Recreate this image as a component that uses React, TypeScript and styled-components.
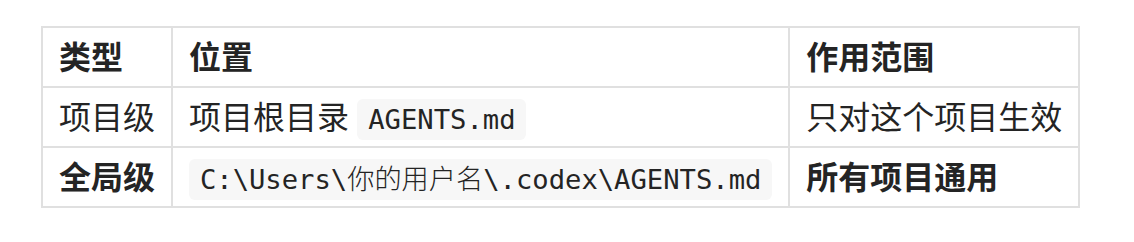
import React from "react";
import styled, { createGlobalStyle } from "styled-components";

const GlobalStyle = createGlobalStyle`
  html, body {
    margin: 0;
    padding: 0;
    background: #ffffff;
  }
`;

const Page = styled.div`
  padding: 26px 41px;
  font-family: "Noto Sans", "Noto Sans CJK SC", sans-serif;
  font-size: 32px;
  line-height: 48px;
  color: #242424;
`;

const Table = styled.table`
  border-collapse: collapse;
  border-spacing: 0;
`;

const Cell = styled.td<{ $bold?: boolean }>`
  border: 2px solid #e0e0e0;
  padding: 5px 16px;
  height: 48px;
  box-sizing: content-box;
  white-space: nowrap;
  font-weight: ${(p) => (p.$bold ? 700 : 400)};
  text-align: left;
  vertical-align: middle;
`;

const HeadCell = styled(Cell).attrs({ as: "th" })`
  font-weight: 700;
`;

const Code = styled.code`
  font-family: "DejaVu Sans Mono", "Noto Sans CJK SC", monospace;
  font-size: 85%;
  font-weight: 400;
  line-height: 1;
  background: #f7f7f7;
  border-radius: 6px;
  padding: 0.2em 0.4em;
`;

const CodeCjk = styled.span`
  font-family: "Noto Sans CJK SC", sans-serif;
  font-weight: 300;
`;

const rows = [
  {
    kind: "项目级",
    place: (
      <>
        项目根目录 <Code>AGENTS.md</Code>
      </>
    ),
    scope: "只对这个项目生效",
    bold: false,
  },
  {
    kind: "全局级",
    place: (
      <Code>
        C:\Users\<CodeCjk>你的用户名</CodeCjk>\.codex\AGENTS.md
      </Code>
    ),
    scope: "所有项目通用",
    bold: true,
  },
];

export default function App() {
  return (
    <Page>
      <GlobalStyle />
      <Table>
        <thead>
          <tr>
            <HeadCell>类型</HeadCell>
            <HeadCell>位置</HeadCell>
            <HeadCell>作用范围</HeadCell>
          </tr>
        </thead>
        <tbody>
          {rows.map((r) => (
            <tr key={r.kind}>
              <Cell $bold={r.bold}>{r.kind}</Cell>
              <Cell>{r.place}</Cell>
              <Cell $bold={r.bold}>{r.scope}</Cell>
            </tr>
          ))}
        </tbody>
      </Table>
    </Page>
  );
}
